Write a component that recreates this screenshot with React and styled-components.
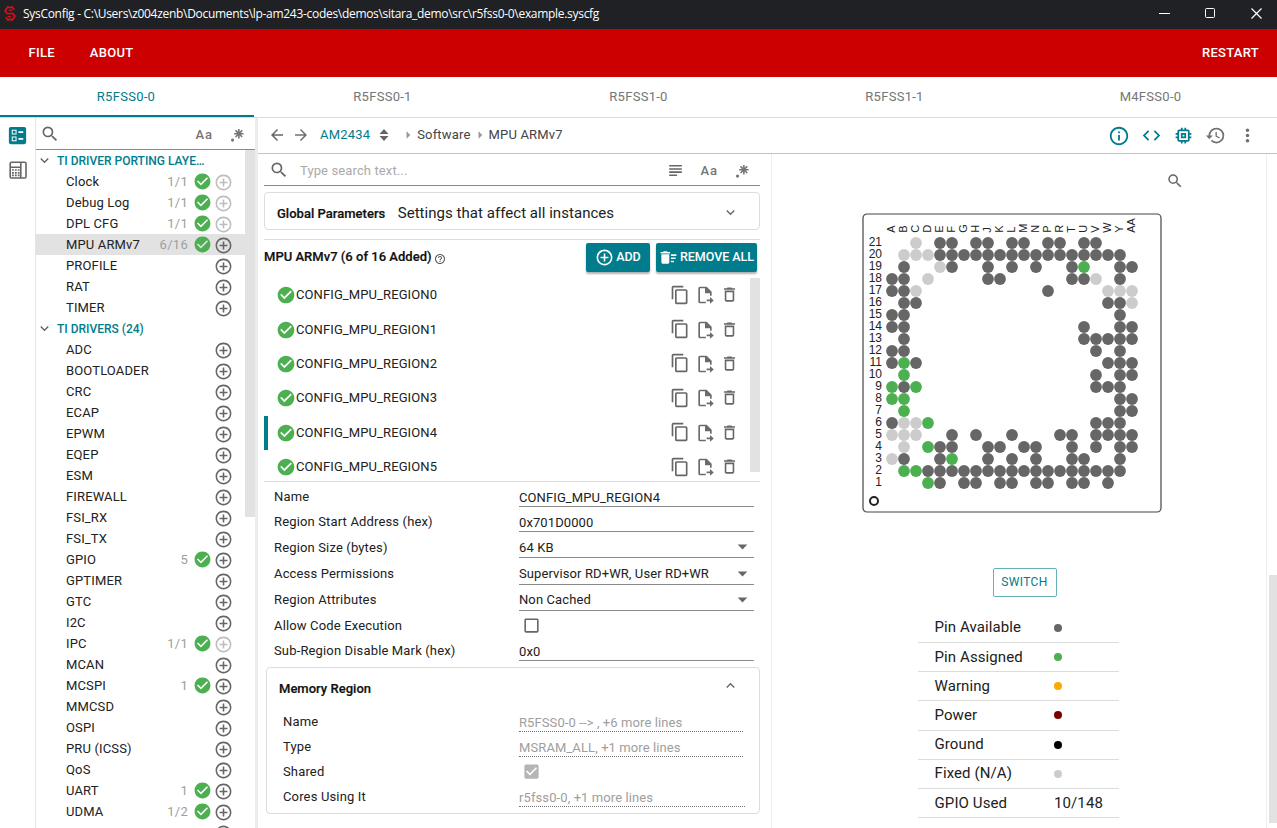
import React from "react";
import styled, { createGlobalStyle } from "styled-components";
import {
  MdSearch, MdArrowBack, MdArrowForward, MdCheckCircle, MdAddCircleOutline, MdContentCopy,
  MdDeleteOutline, MdDeleteSweep, MdMemory, MdCode, MdInfoOutline, MdMoreVert, MdSubject,
  MdHistory, MdArrowDropDown, MdExpandMore, MdExpandLess, MdHelpOutline, MdBallot,
  MdCheckBoxOutlineBlank, MdCheckBox, MdArrowRight,
} from "react-icons/md";

const TEAL = "#007c8c";
const GREEN = "#4caf50";
const GREY = "#666";

const Global = createGlobalStyle`
  * { box-sizing: border-box; }
  html, body { margin: 0; height: 100%; overflow: hidden; }
  body { font: 13px/1 Roboto, "Liberation Sans", sans-serif; letter-spacing: 0.28px; color: #212121; background: #fff; }
  svg { display: block; flex: none; }
`;

const Window = styled.div`width: 1277px; height: 828px; display: flex; flex-direction: column; overflow: hidden;`;

const TitleBar = styled.div`
  height: 29px; flex: none; background: #202124; color: #fff; display: flex; align-items: center; padding: 0 15px 2px 3px;
  font: 12px/1 "Open Sans", "Noto Sans", sans-serif; letter-spacing: -0.3px;
`;
const TitleText = styled.span`margin-left: 6px; flex: 1; white-space: pre; padding-top: 1px;`;
const WindowButtons = styled.div`display: flex; gap: 35px;`;

const MenuBar = styled.div`
  height: 48px; flex: none; background: #c00; color: #fff; display: flex; align-items: center; gap: 35px; padding: 0 18px 2px 28.5px;
  font-weight: 500; letter-spacing: 0.28px;
`;
const Spacer = styled.span`flex: ${(p) => (p.$w ? `0 0 ${p.$w}px` : 1)};`;

const Tabs = styled.div`height: 41px; flex: none; display: flex; border-bottom: 1px solid #dcdcdc; margin-left: -2px; width: 1280px;`;
const Tab = styled.div`
  width: 256px; display: flex; align-items: center; justify-content: center; color: ${(p) => (p.$active ? TEAL : "#757575")};
  border-bottom: 2px solid ${(p) => (p.$active ? TEAL : "transparent")}; padding-left: ${(p) => (p.$active ? 0 : 1)}px;
`;

const Body = styled.div`flex: 1; display: flex; min-height: 0;`;
const Rail = styled.div`
  width: 36px; flex: none; border-right: 1px solid #e6e6e6; display: flex; flex-direction: column; align-items: center; gap: 14px; padding-top: 6px;
`;
const Sidebar = styled.div`width: 219px; flex: none; display: flex; flex-direction: column;`;
const SideSearch = styled.div`
  height: 32px; flex: none; border-bottom: 1px solid #8a8a8a; color: ${GREY}; display: flex; align-items: center; padding: 1px 9px 0 4px;
`;
const CaseToggle = styled.span`font-weight: 500; letter-spacing: 0.9px; color: #757575; margin-right: ${(p) => p.$gap}px;`;
const ScrollArea = styled.div`flex: 1; display: flex; min-height: 0; overflow: hidden;`;
const Tree = styled.div`flex: 1; overflow: hidden;`;
const Thumb = styled.div`width: ${(p) => p.$w || 10}px; flex: none; height: ${(p) => p.$h}px; background: #e2e2e2;`;
const TreeGroup = styled.div`
  height: 21px; display: flex; align-items: center; gap: 4px; color: ${TEAL}; font-size: 12px; font-weight: 500; letter-spacing: 0;
  svg { color: ${GREY}; }
`;
const TreeItem = styled.div`
  height: 21px; display: flex; align-items: center; padding: 0 13px 0 30px;
  background: ${(p) => (p.$active ? "#e2e2e2" : "transparent")}; letter-spacing: 0.14px;
`;
const Count = styled.span`margin-left: auto; color: #9e9e9e; margin-right: 5px; padding-bottom: 1px; letter-spacing: 0.28px;`;
const AddIcon = styled(MdAddCircleOutline)`
  color: ${(p) => (p.$off ? "#bdbdbd" : GREY)}; margin: 1px -1px 0 ${(p) => (p.$solo ? "auto" : "2px")};
`;
const Splitter = styled.div`width: 3px; flex: none; background: #ececec;`;

const Main = styled.div`flex: 1; display: flex; flex-direction: column; min-width: 0;`;
const Toolbar = styled.div`
  height: 36px; flex: none; border-bottom: 1px solid #c4c4c4; display: flex; align-items: center; padding: 0 19px 2px 10px; color: ${GREY};
`;
const Crumb = styled.span`color: ${(p) => (p.$link ? TEAL : "#444")}; margin-left: ${(p) => p.$ml || 0}px; letter-spacing: 0.18px;`;
const ToolIcons = styled.div`margin-left: auto; display: flex; align-items: center; gap: 11px; color: ${TEAL}; padding-top: 2px;`;
const Muted = styled.span`color: #707070; display: flex; margin-left: ${(p) => p.$ml || 0}px;`;

const Panels = styled.div`flex: 1; display: flex; min-height: 0;`;
const Config = styled.div`width: 514px; flex: none; border-right: 1px solid #eee; padding: 0 11px 0 6px; display: flex; flex-direction: column;`;
const ConfigSearch = styled.div`
  height: 32px; flex: none; border-bottom: 1px solid #8a8a8a; display: flex; align-items: center; padding: 1px 9px 0 5px; color: ${GREY};
`;
const Placeholder = styled.span`color: #aaa; margin-left: 11px; flex: 1; letter-spacing: 0.12px;`;
const GlobalCard = styled.div`
  margin-top: 6px; height: 38px; flex: none; border: 1px solid #dcdcdc; border-radius: 4px; display: flex; align-items: center; padding: 5px 20px 0 12px;
  svg { margin-top: -3px; }
`;
const Strong = styled.span`font-weight: 500; color: #111; font-size: 13px; letter-spacing: 0.02px; -webkit-text-stroke: 0.2px #111;`;
const CardNote = styled.span`font-size: 15px; letter-spacing: 0.04px; margin-left: 12.5px; flex: 1; padding-bottom: 1px;`;
const ModuleHeader = styled.div`
  margin-top: 9px; height: 39px; flex: none; border-top: 1px solid #dcdcdc; display: flex; padding: 3px 3px 0 0;
`;
const ModuleTitle = styled.div`display: flex; align-items: center; gap: 2px; flex: 1; height: 27px; svg { margin-top: 4px; color: #555; }`;
const Button = styled.button`
  height: 29px; border: 0; border-radius: 2px; background: ${TEAL}; color: #fff; font: inherit; font-size: 12.5px; font-weight: 500; letter-spacing: -0.04px;
  width: ${(p) => p.$w}px; padding: 0; margin-left: 6px; display: flex; align-items: center; justify-content: center; gap: 2px; white-space: nowrap;
  box-shadow: 0 2px 2px rgba(0, 0, 0, 0.3);
  span { padding-bottom: 1px; }
`;
const InstanceArea = styled.div`height: 204px; flex: none; display: flex; border-bottom: 1px solid #dcdcdc; overflow: hidden;`;
const Instances = styled.div`flex: 1; overflow: hidden;`;
const Instance = styled.div`
  height: 34.4px; display: flex; align-items: center; padding: 0 11px 1px 8px; color: ${GREY};
  border-left: 4px solid ${(p) => (p.$active ? TEAL : "transparent")};
  svg { margin-top: 1px; }
`;
const InstanceName = styled.span`color: #212121; flex: 1; letter-spacing: 0.1px;`;
const Actions = styled.div`display: flex; align-items: center; gap: 5px; svg { margin-top: 0; } svg:nth-child(2) { margin-top: 1px; }`;

const Field = styled.div`
  height: ${(p) => p.$h}px; flex: none; display: flex; padding: ${(p) => (p.$nested ? "0 0 0 16px" : "0 6px 0 10px")};
`;
const FieldLabel = styled.label`width: ${(p) => p.$w}px; flex: none; padding-top: ${(p) => p.$top || 8}px; letter-spacing: 0.15px;`;
const FieldValue = styled.div`
  width: ${(p) => p.$w || 235}px; padding-bottom: ${(p) => p.$pb || 2}px; display: flex; align-items: flex-end; justify-content: space-between;
  letter-spacing: 0.1px;
  border-bottom: ${(p) => (p.$dotted ? "1px dotted #777" : "1px solid #8a8a8a")};
  color: ${(p) => (p.$dotted ? "#9e9e9e" : "#212121")};
  svg { color: ${GREY}; margin-bottom: ${(p) => -1 - (p.$pb || 2)}px; }
`;
const CheckHolder = styled.div`padding: 5px 0 0 3px; color: ${(p) => (p.$off ? "#b5b5b5" : "#666")};`;
const MemoryCard = styled.div`
  margin: 6px 0 0 2px; height: 147px; flex: none; border: 1px solid #dcdcdc; border-radius: 4px;
`;
const MemoryHeader = styled.div`
  height: 39px; display: flex; align-items: center; justify-content: space-between; padding: 2px 20px 1px 12px;
  svg { margin-top: -5px; }
`;

const Device = styled.div`flex: 1; display: flex; flex-direction: column; align-items: center;`;
const DeviceSearch = styled.div`width: 100%; height: 59px; flex: none; color: ${GREY}; padding: 18px 0 0 394px;`;
const Package = styled.svg`margin-left: -15px;`;
const SwitchButton = styled.button`
  margin: 55px -11px 0 0; width: 64px; height: 29px; flex: none; border: 1px solid #66b0ba; border-radius: 2px; background: #fff; color: ${TEAL};
  font: inherit; font-size: 12px; letter-spacing: 0.35px; padding: 0 0 2px;
`;
const Legend = styled.div`width: 201px; margin: 16.8px 1px 0 0;`;
const LegendRow = styled.div`
  height: 29.2px; border-bottom: 1px solid #dcdcdc; display: flex; align-items: center; padding-left: 16.5px; font-size: 15px; letter-spacing: 0.1px;
`;
const LegendLabel = styled.span`width: 119.5px;`;
const Dot = styled.span`width: 8px; height: 8px; border-radius: 50%; background: ${(p) => p.$c};`;
const PageScroll = styled.div`width: 11px; border-left: 1px solid #eee; padding: 421px 0 0 2px; flex: none;`;

const RegexIcon = ({ size = 19 }) => (
  <svg width={size} height={size} viewBox="0 0 24 24" fill="#757575">
    <path d="M16 16.92a6 6 0 0 1-2 0V13.41l-2.5 2.48a7 7 0 0 1-1.39-1.39L12.59 12H9.08a6 6 0 0 1 0-2h3.51L10.11 7.5A7 7 0 0 1 11.5 6.11L14 8.59V5.08a6 6 0 0 1 2 0v3.51l2.5-2.48a7 7 0 0 1 1.39 1.39L17.41 10h3.51a6 6 0 0 1 0 2h-3.51l2.48 2.5a7 7 0 0 1-1.39 1.39L16 13.41zM5 19a2 2 0 1 1 4 0 2 2 0 0 1-4 0z" />
  </svg>
);
const LogoIcon = () => (
  <svg width="14" height="17" viewBox="0 0 14 17" fill="none" stroke="#e01018">
    <path d="M11.300 4.800L9.500 2.600h-5L2.700 4.600v2.600l1.800 1.400h5l1.800 1.600v2.400L9.500 14.400h-5l-1.800-2.200" strokeWidth="1.5" />
    <path d="M9.200 6.200L8.300 5.200H5.800M4.800 10.800l.9 1h2.600" strokeWidth="1.2" />
    <path d="M5 .8v1.400M9 .8v1.400M5 14.800v1.400M9 14.800v1.400M.8 6h1.500M11.700 11h1.500" strokeWidth="1.200" />
  </svg>
);
const BoardIcon = () => (
  <svg width="18" height="18" viewBox="0 0 18 18" fill="none" stroke="#666">
    <rect x="1.2" y="1.2" width="15.8" height="15.8" rx="1.2" strokeWidth="1.6" />
    <path d="M11.8 1v16M1 6.2h10.800" strokeWidth="1.6" />
    <path d="M3 9h7.600M3 11.800h7.600M3 14.400h7.600" strokeWidth="1.7" strokeDasharray="1.8 1.1" />
  </svg>
);
const UnfoldIcon = () => (
  <svg width="10" height="12" viewBox="0 0 10 12" fill="#666"><path d="M5 0l4.500 4.900h-9zM5 12L.5 7.100h9z" /></svg>
);
const ExportIcon = () => (
  <svg width="20" height="20" viewBox="0 0 24 24" fill="#6b6b6b">
    <path d="M6 2h8l6 6v5h-2v-3h-6V4H6v16h7v2H6a2 2 0 0 1-2-2V4c0-1.100.9-2 2-2zM14 17.500h4v-3l4.500 4-4.500 4v-3h-4z" />
  </svg>
);

const group = (title) => ({ group: title });
const item = (name, count, off) => ({ name, count, off });
const TREE = [
  group("TI DRIVER PORTING LAYE…"),
  item("Clock", "1/1", true), item("Debug Log", "1/1", true), item("DPL CFG", "1/1", true), item("MPU ARMv7", "6/16"),
  item("PROFILE"), item("RAT"), item("TIMER"),
  group("TI DRIVERS (24)"),
  item("ADC"), item("BOOTLOADER"), item("CRC"), item("ECAP"), item("EPWM"), item("EQEP"), item("ESM"), item("FIREWALL"),
  item("FSI_RX"), item("FSI_TX"), item("GPIO", "5"), item("GPTIMER"), item("GTC"), item("I2C"), item("IPC", "1/1", true),
  item("MCAN"), item("MCSPI", "1"), item("MMCSD"), item("OSPI"), item("PRU (ICSS)"), item("QoS"), item("UART", "1"),
  item("UDMA", "1/2"), item(""),
];

const COLUMNS = ["A", "B", "C", "D", "E", "F", "G", "H", "J", "K", "L", "M", "N", "P", "R", "T", "U", "V", "W", "Y", "AA"];
// One string per ball row, 21 down to 1: x available, g assigned, f fixed.
const BALLS = [
  "..f.xx.xx.xx.xx.xx...",
  ".fffxxxxxxxxxxxxxxxx.",
  ".x..fx..x.x.x..xg..xx",
  "xx.f....xx.....xxf.x.",
  "xxf..........x....fff",
  ".xx...............xxf",
  "xx.................x.",
  "xx..............x..xx",
  ".x..............xxxxx",
  "xx...............x.x.",
  "xgx...............xxx",
  ".g...............x.xx",
  "gxg..............xxx.",
  "gg.................xx",
  ".g.................xx",
  "xffg.............xxx.",
  "fff..x.x..x...xx.xxxx",
  ".f.gxx..xx.xx..x.x.xx",
  "fx..xg..x.x.x..xx..x.",
  ".ggxxxxxxxxxxxxxxxxx.",
  "...gx.xx.xx.xx.xx.x..",
];
const BALL_COLORS = { x: GREY, g: GREEN, f: "#ccc" };

const Chip = () => (
  <Package width="300" height="300" viewBox="0 0 300 300" fontFamily='"Liberation Sans", sans-serif' fontSize="12" letterSpacing="0">
    <rect x="1" y="1" width="298" height="298" rx="4" fill="#fff" stroke="#444" strokeWidth="1.2" />
    {COLUMNS.map((c, i) => (
      <text key={c} transform={`translate(${33.2 + i * 12} 19.8) rotate(-90)`} fontSize="11" fill="#222">{c}</text>
    ))}
    {BALLS.map((row, r) => (
      <g key={r}>
        <text x="20" y={33 + r * 12} textAnchor="end" fill="#222">{21 - r}</text>
        {[...row].map((b, c) => (b === "." ? null : <circle key={c} cx={30 + c * 12} cy={30 + r * 12} r="5.9" fill={BALL_COLORS[b]} />))}
      </g>
    ))}
    <circle cx="12" cy="288" r="4" fill="none" stroke="#222" strokeWidth="2" />
  </Package>
);

const LEGEND = [
  ["Pin Available", GREY], ["Pin Assigned", GREEN], ["Warning", "#ffa800"], ["Power", "#7a0000"], ["Ground", "#000"], ["Fixed (N/A)", "#ccc"],
];

const TextField = ({ label, value, h, select, top, pb }) => (
  <Field $h={h}>
    <FieldLabel $w={245} $top={top}>{label}</FieldLabel>
    <FieldValue $pb={pb}>{value}{select && <MdArrowDropDown size={23} />}</FieldValue>
  </Field>
);
const ReadOnlyField = ({ label, value, w }) => (
  <Field $h={25} $nested>
    <FieldLabel $w={236}>{label}</FieldLabel>
    <FieldValue $dotted $w={w}>{value}</FieldValue>
  </Field>
);

export default function App() {
  return (
    <Window>
      <Global />
      <TitleBar>
        <LogoIcon />
        <TitleText>SysConfig - C:\Users\z004zenb\Documents\lp-am243-codes\demos\sitara_demo\src\r5fss0-0\example.syscfg</TitleText>
        <WindowButtons>
          <svg width="11" height="11" viewBox="0 0 11 11" stroke="#fff"><path d="M0 5.500h11" /></svg>
          <svg width="11" height="11" viewBox="0 0 11 11" fill="none" stroke="#fff"><rect x=".5" y=".5" width="9" height="9" rx="1" /></svg>
          <svg width="11" height="11" viewBox="0 0 11 11" stroke="#fff" strokeWidth="1.200"><path d="M.5.5l10 10M10.500.5l-10 10" /></svg>
        </WindowButtons>
      </TitleBar>
      <MenuBar><span>FILE</span><span>ABOUT</span><Spacer /><span>RESTART</span></MenuBar>
      <Tabs>
        {["R5FSS0-0", "R5FSS0-1", "R5FSS1-0", "R5FSS1-1", "M4FSS0-0"].map((t, i) => <Tab key={t} $active={i === 0}>{t}</Tab>)}
      </Tabs>
      <Body>
        <Rail><MdBallot size={23} color={TEAL} /><BoardIcon /></Rail>
        <Sidebar>
          <SideSearch>
            <MdSearch size={20} /><Spacer /><CaseToggle $gap={14}>Aa</CaseToggle><RegexIcon />
          </SideSearch>
          <ScrollArea>
            <Tree>
              {TREE.map((n, i) => n.group ? (
                <TreeGroup key={i}><MdExpandMore size={17} />{n.group}</TreeGroup>
              ) : (
                <TreeItem key={i} $active={n.name === "MPU ARMv7"}>
                  {n.name}
                  {n.count && <><Count>{n.count}</Count><MdCheckCircle size={19} color={GREEN} /></>}
                  <AddIcon size={19} $off={n.off} $solo={!n.count} />
                </TreeItem>
              ))}
            </Tree>
            <Thumb $h={367} />
          </ScrollArea>
        </Sidebar>
        <Splitter />
        <Main>
          <Toolbar>
            <MdArrowBack size={18} /><Muted $ml={6}><MdArrowForward size={18} /></Muted>
            <Crumb $link $ml={10}>AM2434</Crumb>
            <Crumb $ml={9}><UnfoldIcon /></Crumb>
            <Crumb $ml={10}><MdArrowRight size={18} color="#999" /></Crumb>
            <Crumb>Software</Crumb>
            <Crumb><MdArrowRight size={18} color="#999" /></Crumb>
            <Crumb>MPU ARMv7</Crumb>
            <ToolIcons>
              <MdInfoOutline size={22} /><MdCode size={21} /><MdMemory size={21} />
              <Muted><MdHistory size={21} /></Muted><Muted><MdMoreVert size={21} /></Muted>
            </ToolIcons>
          </Toolbar>
          <Panels>
            <Config>
              <ConfigSearch>
                <MdSearch size={20} /><Placeholder>Type search text...</Placeholder>
                <MdSubject size={19} /><Spacer $w={16} /><CaseToggle $gap={14}>Aa</CaseToggle><RegexIcon />
              </ConfigSearch>
              <GlobalCard>
                <Strong>Global Parameters</Strong><CardNote>Settings that affect all instances</CardNote><MdExpandMore size={17} color={GREY} />
              </GlobalCard>
              <ModuleHeader>
                <ModuleTitle><Strong>MPU ARMv7 (6 of 16 Added)</Strong><MdHelpOutline size={12} /></ModuleTitle>
                <Button $w={64}><MdAddCircleOutline size={19} /><span>ADD</span></Button>
                <Button $w={101}><MdDeleteSweep size={19} /><span>REMOVE ALL</span></Button>
              </ModuleHeader>
              <InstanceArea>
                <Instances>
                  {[0, 1, 2, 3, 4, 5].map((n) => (
                    <Instance key={n} $active={n === 4}>
                      <MdCheckCircle size={20} color={GREEN} />
                      <InstanceName>CONFIG_MPU_REGION{n}</InstanceName>
                      <Actions><MdContentCopy size={20} /><ExportIcon /><MdDeleteOutline size={19} /></Actions>
                    </Instance>
                  ))}
                </Instances>
                <Thumb $h={194} />
              </InstanceArea>
              <TextField label="Name" value="CONFIG_MPU_REGION4" h={25} />
              <TextField label="Region Start Address (hex)" value="0x701D0000" h={25} />
              <TextField label="Region Size (bytes)" value="64 KB" h={26} top={9} pb={3} select />
              <TextField label="Access Permissions" value="Supervisor RD+WR, User RD+WR" h={27} top={9} pb={4} select />
              <TextField label="Region Attributes" value="Non Cached" h={26} top={8} pb={4} select />
              <Field $h={25}>
                <FieldLabel $w={245}>Allow Code Execution</FieldLabel>
                <CheckHolder><MdCheckBoxOutlineBlank size={19} /></CheckHolder>
              </Field>
              <TextField label="Sub-Region Disable Mark (hex)" value="0x0" h={25} />
              <MemoryCard>
                <MemoryHeader><Strong>Memory Region</Strong><MdExpandLess size={17} color={GREY} /></MemoryHeader>
                <ReadOnlyField label="Name" value="R5FSS0-0 --> , +6 more lines" w={224} />
                <ReadOnlyField label="Type" value="MSRAM_ALL, +1 more lines" w={224} />
                <Field $h={25} $nested>
                  <FieldLabel $w={236}>Shared</FieldLabel>
                  <CheckHolder $off><MdCheckBox size={19} /></CheckHolder>
                </Field>
                <ReadOnlyField label="Cores Using It" value="r5fss0-0, +1 more lines" w={226} />
              </MemoryCard>
            </Config>
            <Device>
              <DeviceSearch><MdSearch size={18} /></DeviceSearch>
              <Chip />
              <SwitchButton>SWITCH</SwitchButton>
              <Legend>
                {LEGEND.map(([label, c]) => <LegendRow key={label}><LegendLabel>{label}</LegendLabel><Dot $c={c} /></LegendRow>)}
                <LegendRow><LegendLabel>GPIO Used</LegendLabel>10/148</LegendRow>
              </Legend>
            </Device>
            <PageScroll><Thumb $w={8} $h={248} /></PageScroll>
          </Panels>
        </Main>
      </Body>
    </Window>
  );
}
